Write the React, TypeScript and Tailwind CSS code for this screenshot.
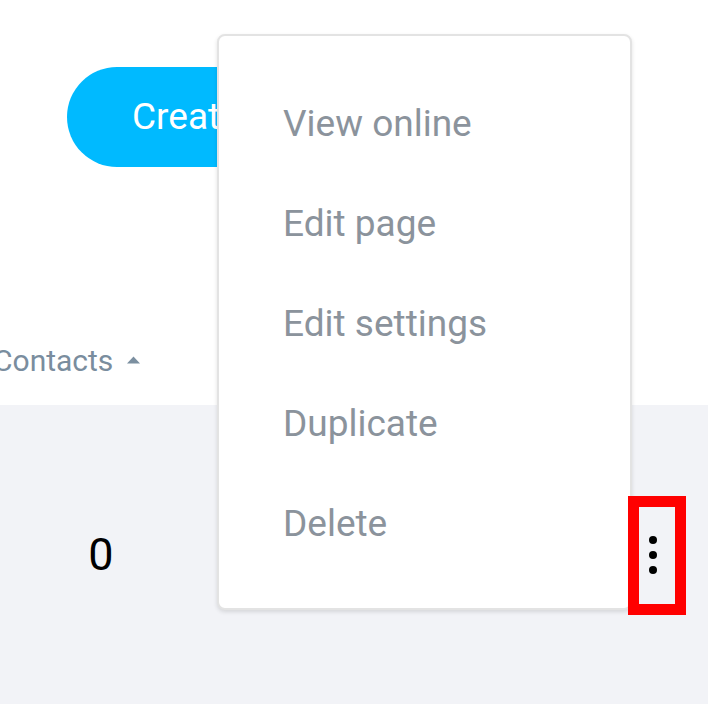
import React from "react";

const items = ["View online", "Edit page", "Edit settings", "Duplicate", "Delete"];

export default function App() {
  return (
    <div className="relative w-[708px] h-[710px] overflow-hidden bg-white font-['Roboto',sans-serif]">
      <div className="pt-[67px] pl-[67px]">
        <button className="h-[100px] w-[400px] rounded-full bg-[#00baff] pl-[65px] text-left text-[37px] text-white">
          Create landing page
        </button>
      </div>

      <div className="mt-[163px] flex h-[61px] items-center gap-[14px] -ml-[7px]">
        <span className="text-[30px] leading-none text-[#7a8d9e]">Contacts</span>
        <svg width="13" height="8" viewBox="0 0 13 8" className="mt-[-2px]">
          <path d="M0 7.5 L6.5 0.5 L13 7.5 Z" fill="#7b8fa0" />
        </svg>
      </div>

      <div className="mt-[14px] flex h-[299px] items-center bg-[#f2f3f7]">
        <div className="w-[202px] text-center text-[45px] leading-none text-black">0</div>
        <div className="ml-auto mr-[51px] flex flex-col gap-[7px]">
          <span className="block h-[8px] w-[8px] rounded-full bg-black" />
          <span className="block h-[8px] w-[8px] rounded-full bg-black" />
          <span className="block h-[8px] w-[8px] rounded-full bg-black" />
        </div>
      </div>

      <div className="absolute left-[217px] top-[34px] flex h-[576px] w-[415px] flex-col rounded-[8px] border-2 border-[#e3e3e3] bg-white pl-[64px] pt-[38px] shadow-[0_2px_4px_rgba(0,0,0,0.12)]">
        {items.map((t) => (
          <div key={t} className="h-[100px] text-[37px] leading-[100px] text-[#8b939c]">
            {t}
          </div>
        ))}
      </div>

      <div className="absolute left-[628px] top-[496px] h-[119px] w-[58px] border-[11px] border-[#ff0000]" />
    </div>
  );
}
